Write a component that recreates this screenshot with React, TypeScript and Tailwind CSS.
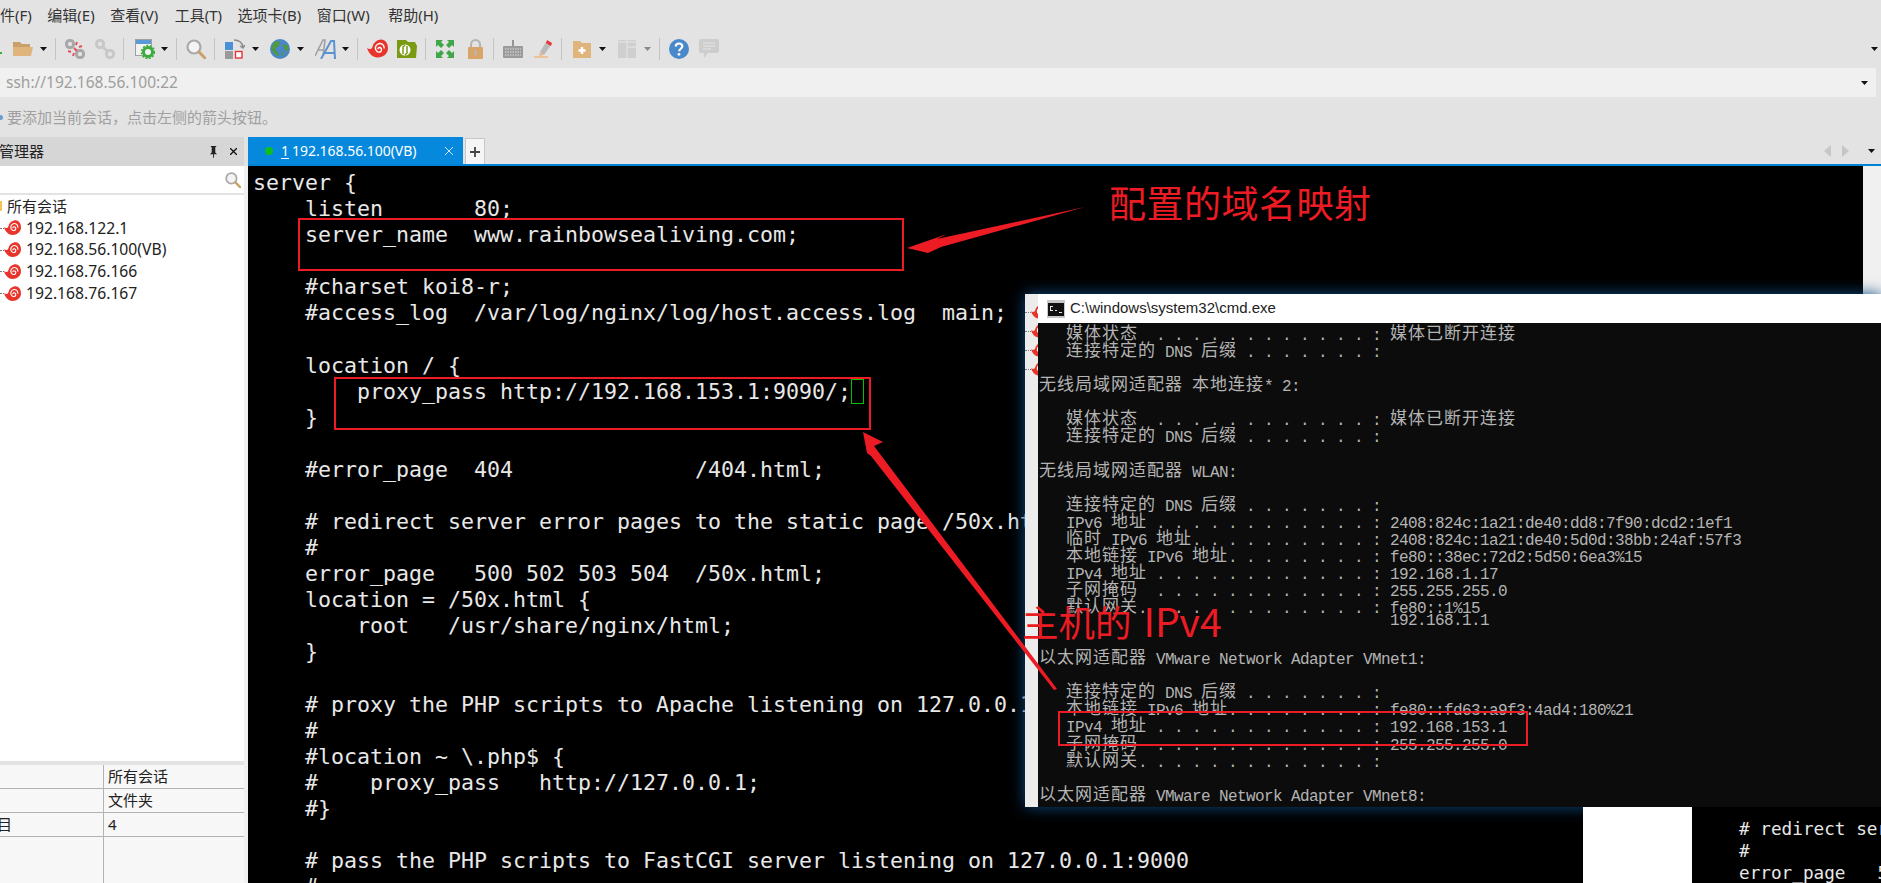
import React from "react";

const Caret = ({ className = "", gray = false }: { className?: string; gray?: boolean }) => (
  <svg viewBox="0 0 7 4" className={`w-[7px] h-[4px] shrink-0 ${className}`}>
    <path d="M0 0h7L3.5 4z" fill={gray ? "#8a8a8a" : "#111"} />
  </svg>
);
const Sep = ({ className = "" }: { className?: string }) => (
  <div className={`w-px h-[22px] bg-[#c4c4c4] shrink-0 ${className}`} />
);

const Snail = ({ className = "" }: { className?: string }) => (
  <svg viewBox="0 0 22 20" className={className}>
    <path d="M0 9C3 11 5 10 6 7C7 3 11 0 15 0C19 0 22 4 22 9C22 15 17 19 11 19C6 19 2 15 0 9z" fill="#e8342a" />
    <path d="M18 9C18 5 14 3 11 5C8 7 8 11 11 13C14 14 16 12 15 9.500C14 8 12 8 11.500 9.500" fill="none" stroke="#fff" strokeWidth="1.500" strokeLinecap="round" />
  </svg>
);

const FolderIcon = ({ className = "" }: { className?: string }) => (
  <svg viewBox="0 0 20 20" className={className}>
    <path d="M0 3h7l2 2h8v4H0z" fill="#c9a06a" />
    <path d="M0 8h20l-2 9H0z" fill="#e0b57c" />
  </svg>
);

const LinkIcon = ({ className = "", broken = false }: { className?: string; broken?: boolean }) => (
  <svg viewBox="0 0 20 20" className={className}>
    <g fill="none" stroke={broken ? "#a8a8a8" : "#c8c8c8"} strokeWidth="3">
      <rect x="1.500" y="1.500" width="7" height="7" rx="3" />
      <rect x="11.500" y="11.500" width="7" height="7" rx="3" />
      {!broken && <path d="M7 7l6 6" />}
    </g>
    {broken && (
      <g fill="none" stroke="#e8505a" strokeWidth="2">
        <path d="M9 9l3 3M12 3l-1 3M17 7l-3 1M3 12l3 1M8 17l1-3" />
      </g>
    )}
  </svg>
);

const WinGear = ({ className = "" }: { className?: string }) => (
  <svg viewBox="0 0 20 20" className={className}>
    <rect x="0.500" y="0.500" width="16" height="16" fill="#f2f2f2" stroke="#a0a0a0" />
    <rect x="1" y="1" width="15" height="4" fill="#5b9bd5" />
    <circle cx="13" cy="13" r="4.500" fill="none" stroke="#3cab3c" strokeWidth="3" />
    <circle cx="13" cy="13" r="6.500" fill="none" stroke="#3cab3c" strokeWidth="1.500" strokeDasharray="2 1.500" />
  </svg>
);

const Magnifier = ({ className = "" }: { className?: string }) => (
  <svg viewBox="0 0 20 20" className={className}>
    <circle cx="8" cy="8" r="6.500" fill="#f4f4f4" stroke="#a9a9a9" strokeWidth="2.200" />
    <path d="M13 13l6 6" stroke="#c9a06a" strokeWidth="3" strokeLinecap="round" />
  </svg>
);

const Transfer = ({ className = "" }: { className?: string }) => (
  <svg viewBox="0 0 20 20" className={className}>
    <rect x="0" y="3" width="8" height="8" fill="#4a90d9" />
    <rect x="0" y="12" width="8" height="8" fill="#9a9a9a" />
    <rect x="10.500" y="12.500" width="6.500" height="6.500" fill="#fff" stroke="#e8343a" strokeWidth="1.400" />
    <path d="M9 1c5 0 8 2 9 7M15 7l3 2 2-3" fill="none" stroke="#8a8a8a" strokeWidth="1.400" />
  </svg>
);

const Globe = ({ className = "" }: { className?: string }) => (
  <svg viewBox="0 0 20 20" className={className}>
    <circle cx="10" cy="10" r="10" fill="#4a86c8" />
    <path d="M5 2l5 1-1 4-4 2 2 4 2 1-1 4-4-4-3-5zM13 5l4 1 2 5-3 1-2-3zM12 14l3-1-2 5z" fill="#4f9a3c" />
  </svg>
);

const FontA = ({ className = "" }: { className?: string }) => (
  <svg viewBox="0 0 25 20" className={className}>
    <path d="M0 17L8 1h2L8 17M3 11h6" fill="none" stroke="#a0a0a0" strokeWidth="1.600" />
    <path d="M6 20L16 2h3l1 18M9 14h10" fill="none" stroke="#5b92d2" strokeWidth="2" />
  </svg>
);

const GreenFolder = ({ className = "" }: { className?: string }) => (
  <svg viewBox="0 0 20 20" className={className}>
    <path d="M0 1h9l2 2h7l2 4-1 12H0z" fill="#7a9a14" />
    <circle cx="8" cy="11" r="5.500" fill="#fff" />
    <path d="M6 15V8l2-2M10 7v7l-2 2" fill="none" stroke="#7a9a14" strokeWidth="1.500" />
  </svg>
);

const FullScreen = ({ className = "" }: { className?: string }) => (
  <svg viewBox="0 0 18 18" className={className}>
    <g fill="#3fa649">
      <path d="M0 0h7L5 2l3 3-3 3-3-3-2 2z" />
      <path d="M18 0h-7l2 2-3 3 3 3 3-3 2 2z" />
      <path d="M0 18h7l-2-2 3-3-3-3-3 3-2-2z" />
      <path d="M18 18h-7l2-2-3-3 3-3 3 3 2-2z" />
    </g>
  </svg>
);

const Lock = ({ className = "" }: { className?: string }) => (
  <svg viewBox="0 0 15 20" className={className}>
    <path d="M3 9V5.500a4.500 4.500 0 0 1 9 0V9" fill="none" stroke="#b4b4b4" strokeWidth="2" />
    <rect x="0" y="8" width="15" height="12" rx="1" fill="#d9a468" />
    <rect x="6.500" y="11" width="2" height="6" fill="#b5b5b5" />
  </svg>
);

const Keyboard = ({ className = "" }: { className?: string }) => (
  <svg viewBox="0 0 20 20" className={className}>
    <rect x="0" y="7" width="20" height="12" rx="1" fill="#9a9a9a" />
    <path d="M10 7V1" stroke="#7a7a7a" strokeWidth="1.500" />
    <path d="M2 10h16M2 13h16M2 16h16" stroke="#e3e3e3" strokeWidth="1" strokeDasharray="1.500 1" />
  </svg>
);

const Highlighter = ({ className = "" }: { className?: string }) => (
  <svg viewBox="0 0 20 20" className={className}>
    <path d="M7 13l6-10 5 3-7 10z" fill="#b9b9b9" />
    <path d="M14 1l5 3-1 3-5-3z" fill="#e8343a" />
    <path d="M7 13l4 3-5 1z" fill="#e5b98a" />
    <path d="M1 18h14" stroke="#f0b478" strokeWidth="1.400" />
  </svg>
);

const FolderPlus = ({ className = "" }: { className?: string }) => (
  <svg viewBox="0 0 18 18" className={className}>
    <path d="M0 1h7l2 2h9v15H0z" fill="#e0b57c" />
    <path d="M9 7v7M5.500 10.500h7" stroke="#fff" strokeWidth="2.400" />
  </svg>
);

const Layout = ({ className = "" }: { className?: string }) => (
  <svg viewBox="0 0 18 18" className={className}>
    <rect width="18" height="18" fill="#cfcfcf" />
    <path d="M9 0v18M9 7h9M0 2h18" stroke="#e6e6e6" strokeWidth="1" />
  </svg>
);

const Help = ({ className = "" }: { className?: string }) => (
  <svg viewBox="0 0 20 20" className={className}>
    <circle cx="10" cy="10" r="10" fill="#4a88cc" />
    <path d="M6.800 7.500C6.800 5.500 8.300 4.500 10 4.500c2 0 3.300 1.200 3.300 2.800 0 2.400-3.200 2.500-3.200 5" fill="none" stroke="#fff" strokeWidth="2.200" />
    <circle cx="10" cy="15.300" r="1.400" fill="#fff" />
  </svg>
);

const Chat = ({ className = "" }: { className?: string }) => (
  <svg viewBox="0 0 20 20" className={className}>
    <path d="M2 0h16a2 2 0 0 1 2 2v10a2 2 0 0 1-2 2H9l-4 5v-5H2a2 2 0 0 1-2-2V2a2 2 0 0 1 2-2z" fill="#cdcdcd" />
    <path d="M4 4h12M4 7h12M4 10h8" stroke="#e6e6e6" strokeWidth="1.200" />
  </svg>
);

const Toolbar = () => (
  <div className="h-[38px] flex items-center">
    <div className="w-[2px] h-[2px] bg-[#3cab3c] shrink-0 mt-[8px]" />
    <FolderIcon className="ml-[11px] w-[20px] h-[20px] shrink-0" />
    <Caret className="ml-[7px]" />
    <Sep className="ml-[8px]" />
    <LinkIcon broken className="ml-[9px] w-[20px] h-[20px] shrink-0" />
    <LinkIcon className="ml-[10px] w-[20px] h-[20px] shrink-0" />
    <Sep className="ml-[8px]" />
    <WinGear className="ml-[11px] w-[20px] h-[20px] shrink-0" />
    <Caret className="ml-[6px]" />
    <Sep className="ml-[8px]" />
    <Magnifier className="ml-[9px] w-[20px] h-[20px] shrink-0" />
    <Sep className="ml-[8px]" />
    <Transfer className="ml-[10px] w-[20px] h-[20px] shrink-0" />
    <Caret className="ml-[7px]" />
    <Globe className="ml-[11px] w-[20px] h-[20px] shrink-0" />
    <Caret className="ml-[7px]" />
    <FontA className="ml-[11px] w-[25px] h-[20px] shrink-0" />
    <Caret className="ml-[2px]" />
    <Sep className="ml-[8px]" />
    <Snail className="ml-[9px] w-[21px] h-[20px] shrink-0" />
    <GreenFolder className="ml-[9px] w-[20px] h-[20px] shrink-0" />
    <Sep className="ml-[8px]" />
    <FullScreen className="ml-[10px] w-[18px] h-[18px] shrink-0" />
    <Lock className="ml-[14px] w-[15px] h-[20px] shrink-0" />
    <Sep className="ml-[10px]" />
    <Keyboard className="ml-[9px] w-[20px] h-[20px] shrink-0" />
    <Highlighter className="ml-[10px] w-[20px] h-[20px] shrink-0" />
    <Sep className="ml-[8px]" />
    <FolderPlus className="ml-[11px] w-[18px] h-[18px] shrink-0" />
    <Caret className="ml-[8px]" />
    <Layout className="ml-[12px] w-[18px] h-[18px] shrink-0" />
    <Caret gray className="ml-[8px]" />
    <Sep className="ml-[8px]" />
    <Help className="ml-[9px] w-[20px] h-[20px] shrink-0" />
    <Chat className="ml-[10px] w-[20px] h-[20px] shrink-0" />
    <Caret className="ml-auto mr-[3px]" />
  </div>
);

const terminal = [
  "server {",
  "    listen       80;",
  "    server_name  www.rainbowsealiving.com;",
  "",
  "    #charset koi8-r;",
  "    #access_log  /var/log/nginx/log/host.access.log  main;",
  "",
  "    location / {",
  "        proxy_pass http://192.168.153.1:9090/;",
  "    }",
  "",
  "    #error_page  404              /404.html;",
  "",
  "    # redirect server error pages to the static page /50x.html",
  "    #",
  "    error_page   500 502 503 504  /50x.html;",
  "    location = /50x.html {",
  "        root   /usr/share/nginx/html;",
  "    }",
  "",
  "    # proxy the PHP scripts to Apache listening on 127.0.0.1:80",
  "    #",
  "    #location ~ \\.php$ {",
  "    #    proxy_pass   http://127.0.0.1;",
  "    #}",
  "",
  "    # pass the PHP scripts to FastCGI server listening on 127.0.0.1:9000",
  "    #",
];

const cmdLines = [
  "   媒体状态  . . . . . . . . . . . . : 媒体已断开连接",
  "   连接特定的 DNS 后缀 . . . . . . . :",
  "",
  "无线局域网适配器 本地连接* 2:",
  "",
  "   媒体状态  . . . . . . . . . . . . : 媒体已断开连接",
  "   连接特定的 DNS 后缀 . . . . . . . :",
  "",
  "无线局域网适配器 WLAN:",
  "",
  "   连接特定的 DNS 后缀 . . . . . . . :",
  "   IPv6 地址 . . . . . . . . . . . . : 2408:824c:1a21:de40:dd8:7f90:dcd2:1ef1",
  "   临时 IPv6 地址. . . . . . . . . . : 2408:824c:1a21:de40:5d0d:38bb:24af:57f3",
  "   本地链接 IPv6 地址. . . . . . . . : fe80::38ec:72d2:5d50:6ea3%15",
  "   IPv4 地址 . . . . . . . . . . . . : 192.168.1.17",
  "   子网掩码  . . . . . . . . . . . . : 255.255.255.0",
  "   默认网关. . . . . . . . . . . . . : fe80::1%15",
  "                                       192.168.1.1",
  "",
  "以太网适配器 VMware Network Adapter VMnet1:",
  "",
  "   连接特定的 DNS 后缀 . . . . . . . :",
  "   本地链接 IPv6 地址. . . . . . . . : fe80::fd63:a9f3:4ad4:180%21",
  "   IPv4 地址 . . . . . . . . . . . . : 192.168.153.1",
  "   子网掩码  . . . . . . . . . . . . : 255.255.255.0",
  "   默认网关. . . . . . . . . . . . . :",
  "",
  "以太网适配器 VMware Network Adapter VMnet8:",
];

const CmdLine = ({ text }: { text: string }) => (
  <div className="h-[17.07px] leading-[17.07px] whitespace-pre overflow-visible">
    {text.split(/([\u3400-\u9fff]+)/).map((part, i) =>
      i % 2 === 1 ? (
        <span key={i} className="text-[17px] tracking-[1px] align-[1px] [font-family:'Noto_Sans_CJK_SC',sans-serif]">
          {part}
        </span>
      ) : (
        <span key={i} className="text-[16px] tracking-[-0.6px]">{part}</span>
      )
    )}
  </div>
);

const sessions = ["192.168.122.1", "192.168.56.100(VB)", "192.168.76.166", "192.168.76.167"];

const CmdWindow = () => (
  <div className="absolute left-[1025px] top-[294px] w-[856px] h-[513px] flex shadow-[0_0_14px_#0d4a80]">
    <div className="w-[13px] bg-[#ececec] flex flex-col items-end pt-[10px] gap-[3px] overflow-hidden shrink-0">
      {[0, 1, 2, 3].map((i) => (
        <div key={i} className="w-[13px] h-[16px] flex items-center overflow-hidden">
          <div className="w-[6px] border-t border-dotted border-[#777] shrink-0" />
          <Snail className="w-[16px] h-[16px] shrink-0" />
        </div>
      ))}
    </div>
    <div className="flex-1 flex flex-col min-w-0">
      <div className="h-[29px] bg-white flex items-center pl-[9px] gap-[5px] shrink-0">
        <svg viewBox="0 0 18 18" className="w-[18px] h-[18px]">
          <rect x="0" y="0" width="18" height="18" fill="#c8c8c8" />
          <rect x="1" y="3" width="16" height="13" fill="#111" />
          <path d="M3 6h3v1H4v3h2v1H3zM8 10h2v1H8zM12 12h3v1h-3z" fill="#e8e8e8" />
        </svg>
        <span className="text-[15px] text-[#222] [font-family:'Liberation_Sans',sans-serif]">
          C:\windows\system32\cmd.exe
        </span>
      </div>
      <div className="flex-1 bg-[#0c0c0c] text-[#b4b4b4] [font-family:'Liberation_Mono',monospace] pl-[1px] overflow-hidden">
        {cmdLines.map((l, i) => (
          <CmdLine key={i} text={l} />
        ))}
      </div>
    </div>
  </div>
);

const Annotations = () => (
  <>
    <div className="absolute left-[298px] top-[218px] w-[606px] h-[53px] border-2 border-[#ed1c24]" />
    <div className="absolute left-[334px] top-[377px] w-[537px] h-[53px] border-2 border-[#ed1c24]" />
    <div className="absolute left-[851px] top-[379px] w-[13px] h-[25px] border border-[#00c000]" />
    <div className="absolute left-[1058px] top-[711px] w-[470px] h-[35px] border-2 border-[#ed1c24]" />
    <div className="absolute left-[1109px] top-[178px] text-[37px] tracking-[0.500px] leading-[48px] text-[#ed1c24] [font-family:'Noto_Sans_CJK_SC',sans-serif] whitespace-pre">
      配置的域名映射
    </div>
    <div className="absolute left-[1022px] top-[596px] text-[36.500px] leading-[48px] text-[#ed1c24] [font-family:'Noto_Sans_CJK_SC',sans-serif] whitespace-pre">
      主机的<span className="ml-[12px] text-[39px]">IPv4</span>
    </div>
    <svg className="absolute left-0 top-0 w-[1881px] h-[883px] pointer-events-none" viewBox="0 0 1881 883">
      <path d="M907 248L947 234L937 239L1085 207L941 247L928 253z" fill="#ed1c24" />
      <path d="M863 432L883 442L874 446L1057 689L1054 690L871 456L867 453z" fill="#ed1c24" />
    </svg>
  </>
);

export default function App() {
  return (
    <div className="relative w-[1881px] h-[883px] overflow-hidden bg-[#e3e3e3] text-[#222] [font-family:'Noto_Sans','Noto_Sans_CJK_SC',sans-serif]">
      <div className="h-[30px] flex items-center gap-[15.500px] text-[15px] text-[#333]">
        <span>件(F)</span>
        <span>编辑(E)</span>
        <span>查看(V)</span>
        <span className="ml-[1px]">工具(T)</span>
        <span>选项卡(B)</span>
        <span>窗口(W)</span>
        <span className="ml-[3px]">帮助(H)</span>
      </div>
      <Toolbar />
      <div className="h-[29px] mr-[5px] bg-[#f0f0f0] flex items-center pl-[6px] pr-[8px] text-[15.500px] text-[#9e9e9e]">
        <span>ssh://192.168.56.100:22</span>
        <Caret className="ml-auto" />
      </div>
      <div className="h-[40px] flex items-center text-[15px] text-[#a0a0a0]">
        <div className="w-[3px] h-[5px] bg-[#6a9fd0] rounded-r-full mr-[4px]" />
        要添加当前会话，点击左侧的箭头按钮。
      </div>

      <div className="flex h-[746px]">
        <div className="w-[244px] flex flex-col shrink-0 bg-white">
          <div className="h-[29px] bg-[#d6d6d6] flex items-center text-[15px] text-[#222] shrink-0">
            <span className="-ml-[1px]">管理器</span>
            <svg viewBox="0 0 10 14" className="ml-auto w-[9px] h-[13px]">
              <path d="M2 1h6v1H7v6l2 2H1l2-2V2H2zM4.500 10h1v4h-1z" fill="#222" />
            </svg>
            <svg viewBox="0 0 8 8" className="ml-[12px] mr-[7px] w-[7px] h-[7px]">
              <path d="M0 0l8 8M8 0L0 8" stroke="#111" strokeWidth="1.500" />
            </svg>
          </div>
          <div className="h-[26px] mt-px flex items-center justify-end pr-[3px] shrink-0">
            <Magnifier className="w-[16px] h-[16px]" />
          </div>
          <div className="h-[2px] bg-[#e3e3e3] shrink-0" />
          <div className="flex-1 text-[15.700px] text-[#222] -mt-[1px]">
            <div className="h-[23.500px] flex items-center">
              <div className="w-[2px] h-[10px] bg-[#f5c451] mr-[5px]" />
              <span className="text-[15px]">所有会话</span>
            </div>
            {sessions.map((s) => (
              <div key={s} className="h-[21.800px] flex items-center">
                <div className="w-[4px] border-t border-dotted border-[#777]" />
                <Snail className="w-[17px] h-[16px] shrink-0" />
                <span className="ml-[5px]">{s}</span>
              </div>
            ))}
          </div>
          <div className="h-[4px] bg-[#e3e3e3] shrink-0" />
          <div className="h-[118px] bg-[#f7f7f7] grid grid-cols-[104px_1fr] grid-rows-[24px_24px_24px_1fr] text-[15px] text-[#222] shrink-0">
            <div className="border-b border-r border-[#b4b4b4]" />
            <div className="border-b border-[#b4b4b4] pl-[4px] flex items-center">所有会话</div>
            <div className="border-b border-r border-[#b4b4b4]" />
            <div className="border-b border-[#b4b4b4] pl-[4px] flex items-center">文件夹</div>
            <div className="border-b border-r border-[#b4b4b4] flex items-center overflow-hidden">
              <span className="-ml-[3px]">目</span>
            </div>
            <div className="border-b border-[#b4b4b4] pl-[4px] flex items-center">4</div>
            <div className="border-r border-[#b4b4b4]" />
            <div />
          </div>
        </div>

        <div className="w-[4px] mt-[29px] bg-[#f0f0f0] shrink-0" />

        <div className="flex-1 flex flex-col min-w-0">
          <div className="h-[27px] flex items-stretch shrink-0">
            <div className="w-[215px] bg-[#0689dd] flex items-center text-[14px] text-white pl-[17px]">
              <div className="w-[8px] h-[8px] rounded-full bg-[#0fbf20] mr-[8px] shrink-0" />
              <span className="underline underline-offset-2">1</span>
              <span className="ml-[3px] tracking-[-0.05px]">192.168.56.100(VB)</span>
              <svg viewBox="0 0 8 8" className="ml-auto mr-[10px] w-[8px] h-[8px]">
                <path d="M0 0l8 8M8 0L0 8" stroke="#cfe6f7" strokeWidth="1" />
              </svg>
            </div>
            <div className="ml-[2px] w-[20px] mt-[1px] bg-[#f5f5f5] border border-[#c8c8c8] border-b-0 flex items-center justify-center">
              <svg viewBox="0 0 10 10" className="w-[10px] h-[10px]">
                <path d="M5 0v10M0 5h10" stroke="#444" strokeWidth="1.800" />
              </svg>
            </div>
            <div className="ml-auto flex items-center pr-[6px]">
              <svg viewBox="0 0 7 12" className="w-[7px] h-[12px]">
                <path d="M7 0v12L0 6z" fill="#c6c6c6" />
              </svg>
              <svg viewBox="0 0 7 12" className="ml-[11px] w-[7px] h-[12px]">
                <path d="M0 0v12l7-6z" fill="#c6c6c6" />
              </svg>
              <Caret className="ml-[19px]" />
            </div>
          </div>
          <div className="h-[2px] bg-[#0083d4] shrink-0" />
          <div className="flex-1 flex min-h-0">
            <div className="flex-1 bg-black overflow-hidden pt-[4px] pl-[5px] text-[21.600px] leading-[26.080px] text-[#e8e8e8] whitespace-pre [font-family:'DejaVu_Sans_Mono',monospace]">
              {terminal.map((l, i) => (
                <div key={i} className="h-[26.080px]">
                  {l}
                </div>
              ))}
            </div>
            <div className="w-[18px] bg-[#f0f0f0] shrink-0" />
          </div>
        </div>
      </div>

      <CmdWindow />

      <div className="absolute left-[1583px] top-[807px] w-[109px] h-[76px] bg-white" />
      <div className="absolute left-[1692px] top-[807px] w-[189px] h-[76px] bg-black overflow-hidden pl-[47px] pt-[11px] text-[17.700px] leading-[22px] text-[#e8e8e8] whitespace-pre [font-family:'DejaVu_Sans_Mono',monospace]">
        <div># redirect server</div>
        <div>#</div>
        <div>error_page   500</div>
      </div>

      <Annotations />
    </div>
  );
}
